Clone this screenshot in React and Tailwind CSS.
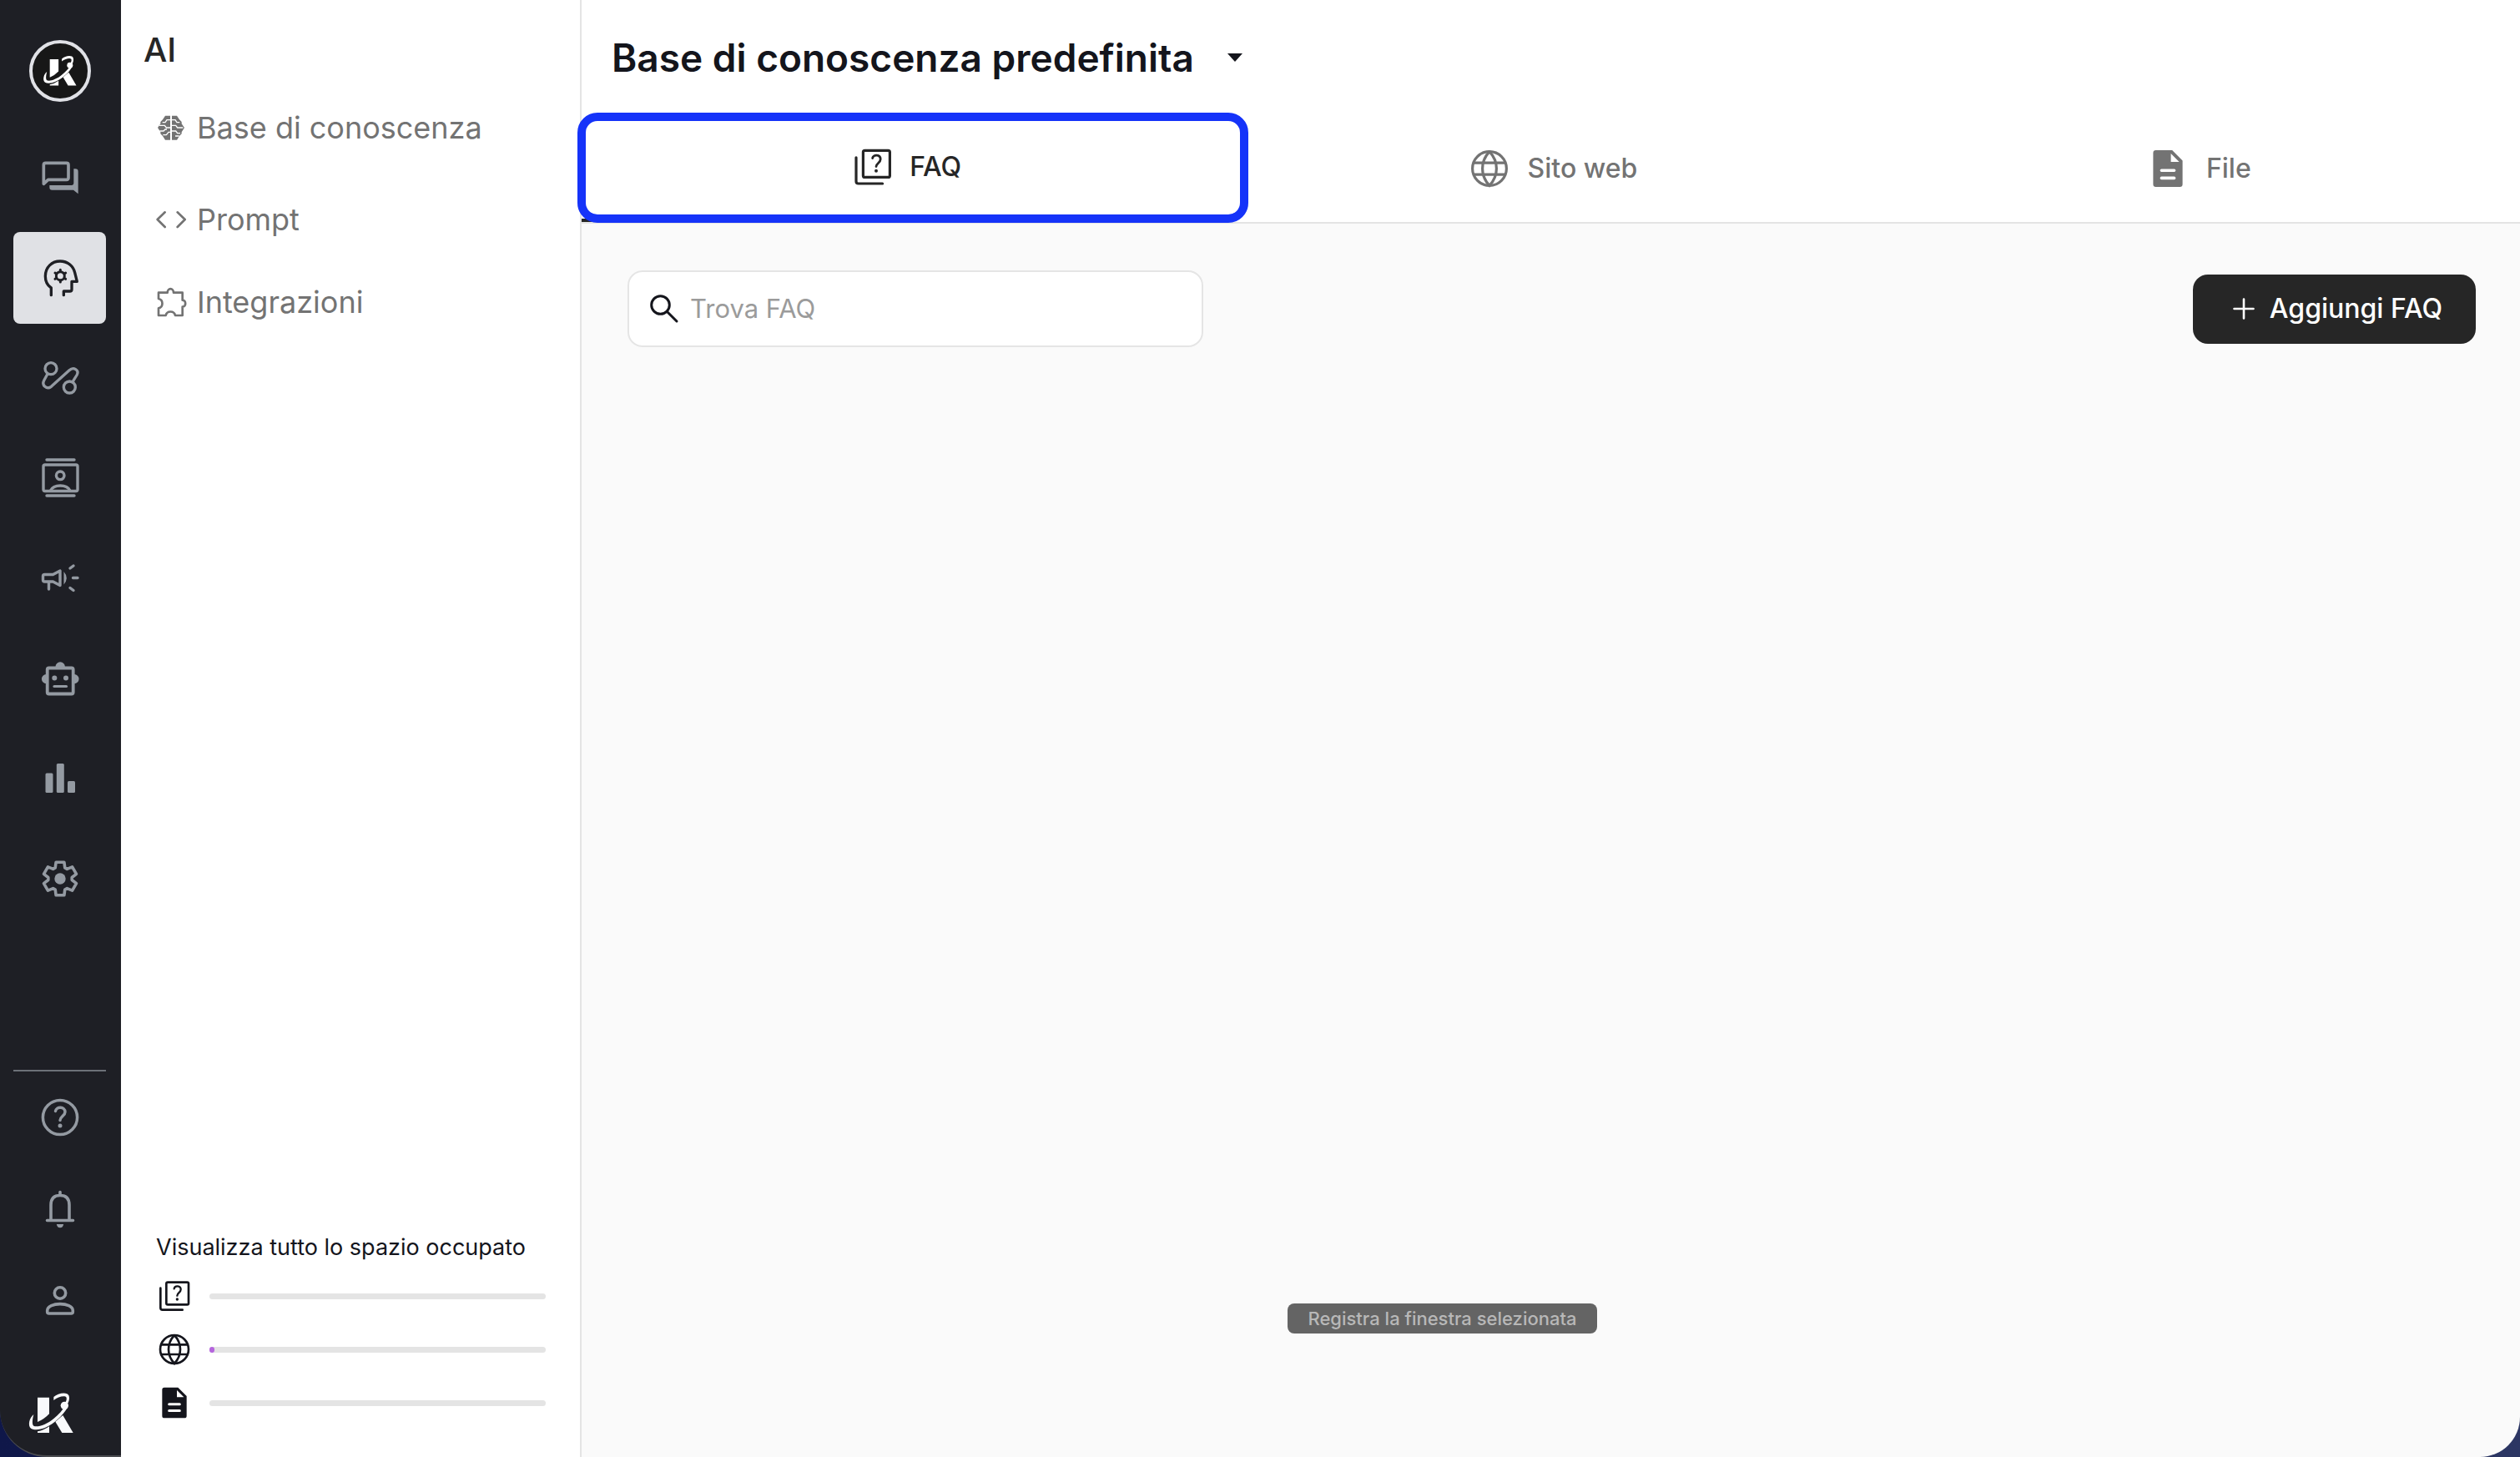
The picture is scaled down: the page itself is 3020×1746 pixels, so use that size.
import React from "react";

const RAIL = "h-14 w-14 fill-none stroke-current [stroke-linecap:round] [stroke-linejoin:round]";

/* Closed outline of a six-toothed cog around (cx, cy). */
function cogPath(cx, cy, outer, inner) {
  const pts = [];
  for (let k = 0; k < 6; k++) {
    const a = k * 60 - 90;
    [[-24, inner], [-14, outer], [14, outer], [24, inner]].forEach(([d, r]) => {
      const t = ((a + d) * Math.PI) / 180;
      pts.push((cx + r * Math.cos(t)).toFixed(1) + " " + (cy + r * Math.sin(t)).toFixed(1));
    });
  }
  return "M" + pts.join("L") + "Z";
}

const ForumIcon = () => (
  <svg viewBox="40 15 168 168" strokeWidth="11" className={RAIL} aria-hidden="true">
    <path d="M65 121V53q0-7 7-7h75q7 0 7 7v46q0 7-7 7H81z" />
    <path d="M173 67h6a10 10 0 0 1 10 10v80l-17-14H95a9 9 0 0 1-9-9v-8h79q8 0 8-9z" className="fill-current" stroke="none" />
  </svg>
);

const HeadIcon = () => (
  <svg viewBox="40 382 168 168" strokeWidth="10" className={RAIL} aria-hidden="true">
    <path d="M92 528V502C77 492 71 476 71 460C71 427 95 406 124 406C152 406 172 425 177 447L185 479H166V507Q166 514 159 514H137V528" />
    <circle cx="125" cy="459" r="15" strokeWidth="9" />
    <path strokeWidth="9" d="M125 437v3M125 478v3M106 448l3 2M141 468l3 2M106 470l3-2M141 450l3-2" />
  </svg>
);

const RouteIcon = () => (
  <svg viewBox="40 743 168 168" strokeWidth="10" className={RAIL} aria-hidden="true">
    <circle cx="91" cy="793" r="21" />
    <circle cx="158" cy="860" r="21" />
    <path d="M79 812L66 836C57 853 76 870 92 858L157 799C173 785 193 799 185 815L169 841" />
  </svg>
);

const ContactsIcon = () => (
  <svg viewBox="43.5 546 56 56" strokeWidth="3.4" className={RAIL} aria-hidden="true">
    <path d="M55.500 552h33M55.500 595h33" />
    <rect x="51.500" y="558" width="41" height="31.500" rx="2" />
    <circle cx="71.700" cy="570.800" r="4.800" />
    <path d="M60 589C64 581 79.500 581 83.500 589" />
  </svg>
);

const CampaignIcon = () => (
  <svg viewBox="43.5 666 56 56" strokeWidth="3.4" className={RAIL} aria-hidden="true">
    <path d="M53 689.500H63L71.500 685V702.500L63 698H53Q51 698 51 696V691.500Q51 689.500 53 689.500ZM58 699V707" />
    <path d="M76 686Q82.500 693.500 76 701.500Z" className="fill-current" stroke="none" />
    <path d="M83.500 682L87.500 679M87 693.500H92.500M83.500 705.500L87.500 708.500" />
  </svg>
);

const RobotIcon = () => (
  <svg viewBox="43.5 785 56 56" strokeWidth="3.8" className={RAIL} aria-hidden="true">
    <rect x="56.200" y="800.500" width="31" height="31" rx="2" />
    <g className="fill-current" stroke="none">
      <path d="M66 799a5.700 5.700 0 0 1 11.400 0zM55 808a5.600 5.600 0 0 0 0 11.200zM88.500 808a5.600 5.600 0 0 1 0 11.200z" />
      <circle cx="64.800" cy="812.500" r="3" />
      <circle cx="78.500" cy="812.500" r="3" />
    </g>
    <path strokeWidth="3.2" d="M64.500 822.500H79" />
  </svg>
);

const ChartIcon = () => (
  <svg viewBox="43.5 906 56 56" className="h-14 w-14 fill-current" aria-hidden="true">
    <rect x="54" y="927.500" width="9" height="23.500" rx="1.500" />
    <rect x="67.300" y="916" width="9" height="35" rx="1.500" />
    <rect x="80.500" y="937" width="9" height="14" rx="1.500" />
  </svg>
);

const SettingsIcon = () => (
  <svg viewBox="43.5 1024 56 56" strokeWidth="3.6" className={RAIL} aria-hidden="true">
    <path d={cogPath(71.5, 1052, 20.3, 14.3)} />
    <circle cx="71.500" cy="1052" r="6.700" className="fill-current" stroke="none" />
  </svg>
);

const HelpIcon = () => (
  <svg viewBox="43.5 1312 56 56" strokeWidth="3.5" className={RAIL} aria-hidden="true">
    <circle cx="71.500" cy="1340" r="20.600" />
    <path d="M66 1332.500C67 1326.500 77.500 1327 77.500 1333.500C77.500 1338 71.500 1339 71.500 1343.500" />
    <circle cx="71.500" cy="1350" r="2.500" className="fill-current" stroke="none" />
  </svg>
);

const BellIcon = () => (
  <svg viewBox="43.5 1422 56 56" strokeWidth="3.6" className={RAIL} aria-hidden="true">
    <path d="M56 1463.500H87M60.500 1463V1445Q60.500 1433.500 71.500 1433.500Q82.500 1433.500 82.500 1445V1463M71.500 1429.500V1432" />
    <path d="M67.300 1468H75.700Q75 1472.200 71.500 1472.200Q68 1472.200 67.300 1468Z" className="fill-current" stroke="none" />
  </svg>
);

const PersonIcon = () => (
  <svg viewBox="43.5 1532 56 56" strokeWidth="3.6" className={RAIL} aria-hidden="true">
    <circle cx="71.500" cy="1550.500" r="6.700" />
    <path d="M56.200 1573V1571.500C56.200 1561 86.800 1561 86.800 1571.500V1573Q86.800 1575 84.800 1575H58.200Q56.200 1575 56.200 1573Z" />
  </svg>
);

const KLogo = ({ className }) => (
  <svg viewBox="36 55 177 159" className={className} aria-hidden="true">
    <g className="fill-current">
      <path d="M75 78H117V137Q98 157 75 166Z" />
      <path d="M75 205V200Q98 196 117 182V205Z" />
      <path d="M139 165L166 142L203 205H163Z" />
      <circle cx="172" cy="107" r="14" />
      <path d="M61 139C46 150 38 180 52 190C70 200 108 192 146 158C162 144 176 128 183 113L174 108C166 122 152 138 134 153C106 177 74 186 61 180C54 175 57 154 61 139Z" />
      <path d="M133 88V76C148 62 182 56 188 72C191 82 188 94 181 103L174 98C179 90 181 82 178 77C172 70 148 76 133 88Z" />
    </g>
  </svg>
);

const BrainIcon = () => (
  <svg viewBox="33 20 108 108" className="h-9 w-9 fill-current" aria-hidden="true">
    <path d="M84 31H66L57 45L49 53V60L39 74L49 90V96L57 104L66 118H84ZM90 31H108L117 45L125 53V60L135 74L125 90V96L117 104L108 118H90Z" />
    <path className="fill-none stroke-white" strokeWidth="4" d="M84 46H72L66 55H56M118 55H108L102 46H90M45 66H64L70 74H84M90 66H104L110 74H130M46 86H60L66 80H72M84 90H78L70 100H58M90 86H104L110 94H120M102 104H116" />
  </svg>
);

const CodeIcon = () => (
  <svg viewBox="33 350 108 108" strokeWidth="8" className="h-9 w-9 fill-none stroke-current [stroke-linecap:round] [stroke-linejoin:round]" aria-hidden="true">
    <path d="M65 378L38 404L65 431M110 378L137 404L110 431" />
  </svg>
);

const PuzzleIcon = () => (
  <svg viewBox="33 648 108 108" strokeWidth="8" className="h-9 w-9 overflow-visible fill-none stroke-current [stroke-linejoin:round]" aria-hidden="true">
    <path d="M42 668H74C74 650 96 650 96 668H128V695C142 695 142 719 128 719V750H102C98 732 72 732 68 750H42V724C60 720 60 694 42 690Z" />
  </svg>
);

const QuizIcon = ({ className }) => (
  <svg viewBox="39 187 120 120" strokeWidth="8" className={className + " fill-none stroke-current [stroke-linecap:round] [stroke-linejoin:round]"} aria-hidden="true">
    <path d="M49 219V290Q49 297 56 297H128" />
    <rect x="70" y="198" width="80" height="80" rx="5" />
    <path strokeWidth="7" d="M98 221C100 209 122 209 122 224C122 235 109 236 109 246" />
    <circle cx="109" cy="259" r="5" className="fill-current" stroke="none" />
  </svg>
);

const GlobeIcon = ({ className }) => (
  <svg viewBox="39 381 120 120" strokeWidth="8" className={className + " fill-none stroke-current"} aria-hidden="true">
    <circle cx="99" cy="441" r="51" />
    <path d="M99 390C71 420 71 462 99 492C127 462 127 420 99 390M50 424H148M50 459H148" />
  </svg>
);

const DocIcon = ({ className }) => (
  <svg viewBox="39 572 120 120" className={className + " fill-current"} aria-hidden="true">
    <path fillRule="evenodd" d="M63 577H112L143 608V679Q143 687 135 687H63Q55 687 55 679V585Q55 577 63 577ZM108 587V612H133ZM80 633a4 4 0 0 0 0 9h38a4 4 0 0 0 0-9zM80 656a4 4 0 0 0 0 9h38a4 4 0 0 0 0-9z" />
  </svg>
);

const railItems = [
  ["Conversazioni", ForumIcon],
  ["AI", HeadIcon],
  ["Flussi", RouteIcon],
  ["Contatti", ContactsIcon],
  ["Campagne", CampaignIcon],
  ["Chatbot", RobotIcon],
  ["Statistiche", ChartIcon],
  ["Impostazioni", SettingsIcon],
];

const railFooter = [
  ["Aiuto", HelpIcon],
  ["Notifiche", BellIcon],
  ["Profilo", PersonIcon],
];

function RailButton({ label, Icon, active }) {
  return (
    <button
      type="button"
      aria-label={label}
      className={
        active
          ? "flex h-[110px] w-full items-center justify-center rounded-lg bg-[#e0e1e5] text-[#1e1f24]"
          : "flex h-[110px] w-full items-center justify-center rounded-lg text-[#949aa2]"
      }
    >
      <Icon />
    </button>
  );
}

function Rail() {
  return (
    <nav aria-label="Principale" className="flex w-[145px] shrink-0 flex-col rounded-bl-[56px] border-b-2 border-[#4b4c50] bg-[#1e1f25] pr-[18px] pb-6 pl-4">
      <button type="button" aria-label="Area di lavoro" className="mt-12 flex h-[74px] w-[74px] items-center justify-center self-center rounded-full border-4 border-[#e0e1e6] bg-[#171717] text-white">
        <KLogo className="h-10 w-11" />
      </button>
      <div className="mt-9 flex flex-col gap-[10px]">
        {railItems.map(([label, Icon]) => (
          <RailButton key={label} label={label} Icon={Icon} active={label === "AI"} />
        ))}
      </div>
      <div className="mt-auto flex flex-col border-t-2 border-[#6c7178]">
        {railFooter.map(([label, Icon]) => (
          <RailButton key={label} label={label} Icon={Icon} />
        ))}
      </div>
      <KLogo className="mt-[53px] ml-4 h-[53px] w-[59px] text-[#f8f9fb]" />
    </nav>
  );
}

const storage = [
  ["FAQ", QuizIcon, 0],
  ["Sito web", GlobeIcon, 1.6],
  ["File", DocIcon, 0],
];

function SidePanel() {
  return (
    <aside className="flex w-[552px] shrink-0 flex-col border-r-2 border-[#e4e4e4] bg-white">
      <h2 className="mt-9 ml-[27px] text-[40px] leading-12 font-medium text-[#262626]">AI</h2>
      <ul className="mt-[42px] ml-[42px] text-[36px] leading-[54px] text-[#737373]">
        <li>
          <a href="#base" className="flex items-center gap-[13px]"><BrainIcon />Base di conoscenza</a>
        </li>
        <li className="mt-14">
          <a href="#prompt" className="flex items-center gap-[13px]"><CodeIcon />Prompt</a>
        </li>
        <li className="mt-[45px]">
          <a href="#integrazioni" className="flex items-center gap-[13px]"><PuzzleIcon />Integrazioni</a>
        </li>
      </ul>
      <div className="mt-auto mr-[41px] mb-[45px] ml-[42px] text-[#14151c]">
        <a href="#spazio" className="block pb-[18px] text-[27px] leading-10 whitespace-nowrap">Visualizza tutto lo spazio occupato</a>
        <ul className="flex flex-col gap-6 pl-[2px]">
          {storage.map(([label, Icon, used]) => (
            <li key={label} className="flex items-center gap-[22px]">
              <Icon className="h-10 w-10 shrink-0" />
              <div role="progressbar" aria-label={label} aria-valuenow={used} className="h-[7px] flex-1 rounded-full bg-[#e4e4e4]">
                <div className="h-full rounded-full bg-[#b565dd]" style={{ width: used + "%" }} />
              </div>
            </li>
          ))}
        </ul>
      </div>
    </aside>
  );
}

const tabs = [
  ["FAQ", QuizIcon],
  ["Sito web", GlobeIcon],
  ["File", DocIcon],
];

export default function App() {
  return (
    <div className="flex min-h-screen bg-linear-to-r from-[#0f1749] to-[#2c3663] font-['Inter',sans-serif]">
      <Rail />
      <SidePanel />
      <main className="relative flex min-w-0 flex-1 flex-col rounded-br-[48px] bg-[#fafafa]">
        <header className="flex h-[138px] items-center bg-white pl-9">
          <h1>
            <button type="button" className="flex items-center gap-10 text-[46px] leading-[54px] font-semibold text-[#14151c]">
              Base di conoscenza predefinita
              <svg viewBox="0 0 18 10" className="h-[10px] w-[18px] fill-current" aria-hidden="true">
                <path d="M0 0H18L9 10Z" />
              </svg>
            </button>
          </h1>
        </header>
        <div role="tablist" className="grid grid-cols-3 border-b-2 border-[#e4e4e4] bg-white">
          {tabs.map(([label, Icon], i) => (
            <button
              key={label}
              type="button"
              role="tab"
              aria-selected={i === 0}
              className={
                i === 0
                  ? "relative flex h-32 items-center justify-center gap-5 border-b-4 border-[#262626] pl-[6px] text-[32px] font-medium text-[#262626]"
                  : "flex h-32 items-center justify-center gap-[22px] pl-[6px] text-[32px] font-medium text-[#737373]"
              }
            >
              <Icon className="h-12 w-12 shrink-0" />
              {label}
              {i === 0 && (
                <span className="absolute -top-[3px] -right-[25px] -bottom-[5px] -left-[5px] rounded-3xl border-[10px] border-[#1533f9]" />
              )}
            </button>
          ))}
        </div>
        <div className="flex items-center justify-between pt-14 pr-[53px] pl-[55px]">
          <label className="flex h-[92px] w-[690px] items-center rounded-[18px] border-2 border-[#e5e5e5] bg-white pr-6 pl-6">
            <svg viewBox="0 0 36 36" strokeWidth="3" className="h-9 w-9 shrink-0 fill-none stroke-[#14151c]" aria-hidden="true">
              <circle cx="13.500" cy="13.500" r="10.800" />
              <path strokeLinecap="round" d="M21.500 21.500L33 33" />
            </svg>
            <input type="search" aria-label="Trova FAQ" placeholder="Trova FAQ" className="ml-[13px] min-w-0 flex-1 bg-transparent text-[31px] leading-10 outline-none placeholder:text-[#9b9b9b]" />
          </label>
          <button type="button" className="flex h-[83px] items-center gap-[18px] rounded-[18px] bg-[#262626] pr-10 pl-12 text-[32px] font-medium text-white">
            <svg viewBox="0 0 26 26" className="h-[26px] w-[26px] stroke-white" strokeWidth="2.6" strokeLinecap="round" aria-hidden="true">
              <path d="M13 1.500V24.500M1.500 13H24.500" />
            </svg>
            Aggiungi FAQ
          </button>
        </div>
        <div role="tooltip" className="absolute bottom-[148px] left-[846px] flex h-9 w-[371px] items-center justify-center rounded-lg bg-[#646464] text-[22px] font-medium text-[#b8b8b8]">
          Registra la finestra selezionata
        </div>
      </main>
    </div>
  );
}
